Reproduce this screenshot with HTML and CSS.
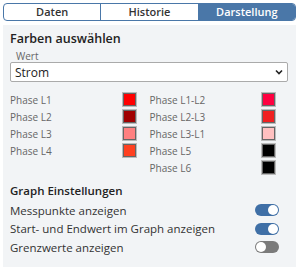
FILE: index.html
```html
<!DOCTYPE html>
<html>
<head>
<meta charset="utf-8">
<link rel="stylesheet" href="styles.css">
</head>
<body>
<div class="tabs">
  <div class="tab">Daten</div>
  <div class="tab">Historie</div>
  <div class="tab active">Darstellung</div>
</div>
<div class="panel">
  <div class="heading">Farben auswählen</div>
  <div class="label">Wert</div>
  <div class="select">
    <span>Strom</span>
    <svg width="8" height="6" viewBox="0 0 8 6"><path d="M1 1.5 L4 4.5 L7 1.5" fill="none" stroke="#222" stroke-width="1.6"/></svg>
  </div>
  <div class="colors">
    <div class="col">
      <div class="crow"><span>Phase L1</span><i class="sw" style="background:#ff0000"></i></div>
      <div class="crow"><span>Phase L2</span><i class="sw" style="background:#a00000"></i></div>
      <div class="crow"><span>Phase L3</span><i class="sw" style="background:#ff8080"></i></div>
      <div class="crow"><span>Phase L4</span><i class="sw" style="background:#ff4020"></i></div>
    </div>
    <div class="col">
      <div class="crow"><span>Phase L1-L2</span><i class="sw" style="background:#ff0040"></i></div>
      <div class="crow"><span>Phase L2-L3</span><i class="sw" style="background:#f02020"></i></div>
      <div class="crow"><span>Phase L3-L1</span><i class="sw" style="background:#ffc0c0"></i></div>
      <div class="crow"><span>Phase L5</span><i class="sw" style="background:#000000"></i></div>
      <div class="crow"><span>Phase L6</span><i class="sw" style="background:#000000"></i></div>
    </div>
  </div>
  <div class="heading small">Graph Einstellungen</div>
  <div class="toggles">
    <div class="trow"><span>Messpunkte anzeigen</span><i class="toggle on"></i></div>
    <div class="trow"><span>Start- und Endwert im Graph anzeigen</span><i class="toggle on"></i></div>
    <div class="trow"><span>Grenzwerte anzeigen</span><i class="toggle"></i></div>
  </div>
</div>
</body>
</html>
```
FILE: styles.css
```css
body {
  margin: 0;
  padding: 3px 4px 0 3px;
  font-family: "Open Sans", "Noto Sans", sans-serif;
  background: #fff;
  color: #333;
}
.tabs {
  display: flex;
  border: 1px solid #4a77a8;
  border-radius: 4px;
  overflow: hidden;
  height: 16px;
}
.tab {
  flex: 1;
  text-align: center;
  font-size: 11px;
  font-weight: 600;
  line-height: 16px;
  color: #333;
  border-left: 1px solid #4a77a8;
}
.tab:first-child { border-left: none; }
.tab.active { background: #4a77a8; color: #fff; }
.panel {
  margin-top: 4px;
  background: #f2f4f6;
  padding: 6px 7px 10px 7px;
}
.heading {
  font-size: 12.5px;
  font-weight: 600;
  color: #222;
  line-height: 16px;
}
.heading.small { font-size: 11.5px; margin-top: 7px; }
.label {
  font-size: 10px;
  color: #666;
  margin: 3px 0 0 6px;
  line-height: 12px;
}
.select {
  display: flex;
  align-items: center;
  justify-content: space-between;
  height: 18px;
  border: 1px solid #aaa;
  border-radius: 2px;
  background: #fff;
  padding: 0 4px;
  margin-right: 1px;
  font-size: 12px;
  color: #222;
}
.colors {
  display: flex;
  margin-top: 9px;
}
.col { width: 140px; display: flex; flex-direction: column; }
.crow {
  display: flex;
  justify-content: space-between;
  align-items: center;
  height: 17px;
  font-size: 10px;
  color: #666;
  padding-right: 14px;
}
.sw {
  width: 11px;
  height: 11px;
  border: 1px solid #666;
  outline: 1px solid #bbb;
  display: block;
}
.toggles { margin-top: 2px; }
.trow {
  display: flex;
  justify-content: space-between;
  align-items: center;
  height: 18.5px;
  font-size: 11.5px;
  color: #333;
  padding-right: 10px;
}
.toggle {
  display: block;
  position: relative;
  width: 24px;
  height: 12px;
  border-radius: 6px;
  background: #7b7b7b;
}
.toggle::after {
  content: "";
  position: absolute;
  top: 1px;
  left: 1px;
  width: 10px;
  height: 10px;
  border-radius: 50%;
  background: #fff;
}
.toggle.on { background: #3f6fa6; }
.toggle.on::after { left: 13px; }
```
